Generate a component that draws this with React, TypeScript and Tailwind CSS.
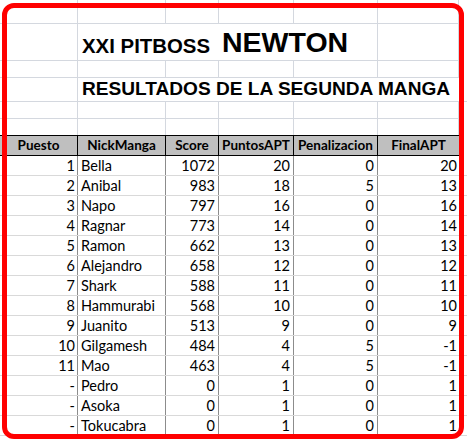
const rows: [string, string, number, number, number, number][] = [
  ["1", "Bella", 1072, 20, 0, 20],
  ["2", "Anibal", 983, 18, 5, 13],
  ["3", "Napo", 797, 16, 0, 16],
  ["4", "Ragnar", 773, 14, 0, 14],
  ["5", "Ramon", 662, 13, 0, 13],
  ["6", "Alejandro", 658, 12, 0, 12],
  ["7", "Shark", 588, 11, 0, 11],
  ["8", "Hammurabi", 568, 10, 0, 10],
  ["9", "Juanito", 513, 9, 0, 9],
  ["10", "Gilgamesh", 484, 4, 5, -1],
  ["11", "Mao", 463, 4, 5, -1],
  ["-", "Pedro", 0, 1, 0, 1],
  ["-", "Asoka", 0, 1, 0, 1],
  ["-", "Tokucabra", 0, 1, 0, 1],
];

const headers = ["Puesto", "NickManga", "Score", "PuntosAPT", "Penalizacion", "FinalAPT"];
const widths = ["w-[78px]", "w-[88px]", "w-[53px]", "w-[75px]", "w-[84px]", "w-[81px]"];

function BlankRow({ h }: { h: string }) {
  return (
    <div className={`flex ${h}`}>
      {widths.map((w, i) => (
        <div key={i} className={`${w} shrink-0 border-r border-b border-[#d4d8df]`} />
      ))}
    </div>
  );
}

export default function App() {
  return (
    <div className="relative w-[467px] h-[441px] bg-white overflow-hidden font-['Lato',sans-serif] text-black">
      {/* title area */}
      <BlankRow h="h-[24px]" />
      <div className="flex h-[37px] font-['Liberation_Sans',Arial,sans-serif] font-bold">
        <div className="w-[78px] shrink-0 border-r border-b border-[#d4d8df]" />
        <div className="w-[141px] shrink-0 border-b border-[#d4d8df] flex items-end pl-[4px] pb-[4px] text-[20.4px] leading-none whitespace-nowrap">
          XXI PITBOSS
        </div>
        <div className="w-[159px] shrink-0 border-r border-b border-[#d4d8df] flex items-end pl-[3px] pb-[4px] text-[28.5px] leading-none whitespace-nowrap">
          NEWTON
        </div>
        <div className="w-[81px] shrink-0 border-r border-b border-[#d4d8df]" />
      </div>
      <BlankRow h="h-[17px]" />
      <div className="flex h-[24px] font-['Liberation_Sans',Arial,sans-serif] font-bold">
        <div className="w-[78px] shrink-0 border-r border-b border-[#d4d8df]" />
        <div className="w-[389px] shrink-0 border-b border-[#d4d8df] flex items-end pl-[4px] pb-[3px] text-[19.1px] leading-none whitespace-nowrap">
          RESULTADOS DE LA SEGUNDA MANGA
        </div>
      </div>
      <BlankRow h="h-[17px]" />
      <div className="flex h-[16px]">
        {widths.map((w, i) => (
          <div key={i} className={`${w} shrink-0 border-r border-[#d4d8df]`} />
        ))}
      </div>

      {/* table */}
      <div className="flex h-[21px] w-fit bg-[#bfbfbf] border-t border-b border-black text-[13.5px] font-bold">
        {headers.map((t, i) => (
          <div
            key={t}
            className={`${widths[i]} shrink-0 ${i < 5 ? "border-r border-black" : ""} flex items-center justify-center leading-none`}
          >
            {t}
          </div>
        ))}
      </div>
      {rows.map((r) => (
        <div key={r[1]} className="flex h-[20px] border-b border-[#d9d9d9] text-[14.5px] leading-[19px]">
          <div className="w-[78px] shrink-0 border-r border-[#8c8c8c] text-right pr-[2px]">{r[0]}</div>
          <div className="w-[88px] shrink-0 border-r border-[#8c8c8c] pl-[3px]">{r[1]}</div>
          <div className="w-[53px] shrink-0 border-r border-[#8c8c8c] text-right pr-[3px]">{r[2]}</div>
          <div className="w-[75px] shrink-0 border-r border-[#8c8c8c] text-right pr-[3px]">{r[3]}</div>
          <div className="w-[84px] shrink-0 border-r border-[#8c8c8c] text-right pr-[3px]">{r[4]}</div>
          <div className="w-[81px] shrink-0 text-right pr-[2px]">{r[5]}</div>
        </div>
      ))}

      {/* red highlight frame drawn over the sheet */}
      <div className="absolute left-[2px] top-[3px] w-[462px] h-[436px] rounded-[12px] border-[5px] border-[#ff0000] pointer-events-none" />
    </div>
  );
}
